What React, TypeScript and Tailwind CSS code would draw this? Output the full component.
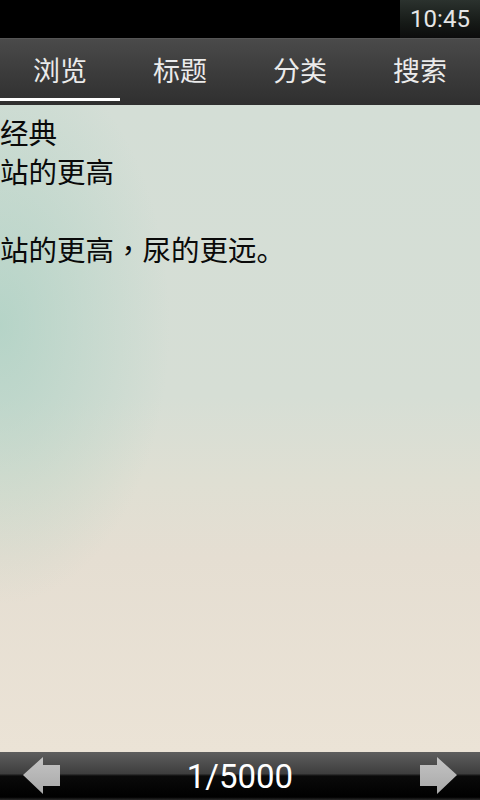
import React from "react";

const cjk = { fontFamily: '"Noto Sans CJK SC", "Noto Sans", sans-serif' };
const cjkTC = { fontFamily: '"Noto Sans CJK TC", "Noto Sans", sans-serif' };

function LeftArrow() {
  return (
    <svg width="40" height="40" viewBox="0 0 40 40">
      <defs>
        <linearGradient id="ag" x1="0" y1="0" x2="0" y2="1">
          <stop offset="0" stopColor="#c4c4c4" />
          <stop offset="1" stopColor="#a8a8a8" />
        </linearGradient>
      </defs>
      <polygon points="1,19 21,1 21,9 38,9 38,30 21,30 21,38" fill="url(#ag)" />
    </svg>
  );
}

function RightArrow() {
  return (
    <svg width="40" height="40" viewBox="0 0 40 40">
      <defs>
        <linearGradient id="ag2" x1="0" y1="0" x2="0" y2="1">
          <stop offset="0" stopColor="#c4c4c4" />
          <stop offset="1" stopColor="#a8a8a8" />
        </linearGradient>
      </defs>
      <polygon points="39,19 19,1 19,9 2,9 2,30 19,30 19,38" fill="url(#ag2)" />
    </svg>
  );
}

export default function App() {
  const tabs = ["浏览", "标题", "分类", "搜索"];
  return (
    <div className="w-[480px] h-[800px] flex flex-col overflow-hidden bg-black">
      <div className="h-[38px] flex justify-end bg-black shrink-0">
        <div
          className="w-[80px] h-full flex items-center justify-center text-[24px] text-[#e6e6e6] bg-[linear-gradient(180deg,#2b322e_0%,#161a17_60%,#0c0c0c_100%)]"
          style={{ fontFamily: "Roboto, sans-serif" }}
        >
          10:45
        </div>
      </div>
      <div className="h-[67px] shrink-0 flex bg-[linear-gradient(180deg,#4a4a4a_0%,#3c3c3c_50%,#2f2f2f_100%)] border-t border-[#555]">
        {tabs.map((t, i) => (
          <div key={t} className="flex-1 flex flex-col">
            <div
              className="flex-1 flex items-center justify-center text-[27px] text-[#ebebeb] pt-[4px]"
              style={cjk}
            >
              {t}
            </div>
            <div className={i === 0 ? "h-[3px] bg-white mb-[4px]" : "h-[3px] mb-[4px]"} />
          </div>
        ))}
      </div>
      <div
        className="flex-1 bg-[radial-gradient(ellipse_170px_280px_at_0px_220px,rgba(160,205,190,0.6),rgba(160,205,190,0)),linear-gradient(180deg,#d4ded6_0%,#d6ded5_45%,#dfdfd3_58%,#e5ded2_70%,#ebe3d6_100%)] text-[#0a0a0a] text-[28.5px] leading-[39px] pt-[7px]"
        style={cjk}
      >
        <div>经典</div>
        <div>站的更高</div>
        <div>&nbsp;</div>
        <div>
          站的更高<span style={cjkTC}>，</span>尿的更远。
        </div>
      </div>
      <div className="h-[48px] shrink-0 flex items-center justify-between px-[22px] bg-[linear-gradient(180deg,#5e5e5e_0%,#3e3e3e_45%,#0a0a0a_50%,#000_94%,#2a2a2a_100%)]">
        <LeftArrow />
        <div
          className="text-[33px] text-white leading-none"
          style={{ fontFamily: "Roboto, sans-serif" }}
        >
          1/5000
        </div>
        <RightArrow />
      </div>
    </div>
  );
}
